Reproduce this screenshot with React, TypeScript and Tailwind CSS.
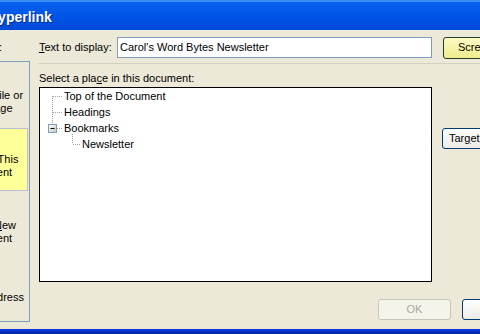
import React from "react";

// XP-style "Insert Hyperlink" dialog, cropped view
const sideItems = [
  { lines: ["Existing File or", "Web Page"], pt: "pt-[27px]", h: "h-[66px]" },
  { lines: ["Place in This", "Document"], pt: "pt-[24px]", h: "h-[63px]", active: true },
  { lines: ["Create New", "Document"], pt: "pt-[28px]", h: "h-[66px]", accel: true },
  { lines: ["E-mail Address"], pt: "pt-[34px]", h: "h-[64px]" },
];

function TreeLines() {
  return (
    <svg
      className="pointer-events-none absolute left-0 top-0"
      width="60"
      height="70"
      viewBox="0 0 60 70"
    >
      <g stroke="#a0a0a0" strokeWidth="1" strokeDasharray="1 1" fill="none">
        <line x1="12.5" y1="8" x2="12.5" y2="36" />
        <line x1="13" y1="8.5" x2="23" y2="8.5" />
        <line x1="13" y1="24.5" x2="23" y2="24.5" />
        <line x1="17" y1="40.5" x2="23" y2="40.5" />
        <line x1="32.5" y1="46" x2="32.5" y2="56" />
        <line x1="33" y1="56.5" x2="41" y2="56.5" />
      </g>
      <defs>
        <linearGradient id="exp" x1="0" y1="0" x2="1" y2="1">
          <stop offset="0" stopColor="#ffffff" />
          <stop offset="1" stopColor="#c6c6bb" />
        </linearGradient>
      </defs>
      <rect x="8.5" y="36.5" width="8" height="8" fill="url(#exp)" stroke="#7f9db9" />
      <line x1="10.5" y1="40.5" x2="14.5" y2="40.5" stroke="#000" />
    </svg>
  );
}

export default function App() {
  return (
    <div className="flex h-[334px] w-[480px] flex-col overflow-hidden font-['Liberation_Sans',Arial,sans-serif] text-[11px] leading-[13px] text-black">
      {/* Title bar */}
      <div className="flex h-[30px] shrink-0 items-center overflow-hidden border-t-2 border-[#3c8cf8] bg-linear-to-b from-[#0a62f0] via-[#0055e6] to-[#0049d8] pt-[3px]">
        <span className="-ml-[54px] whitespace-nowrap text-[14px] font-bold text-white [text-shadow:1px_1px_0_#0a2a8c]">
          Insert Hyperlink
        </span>
      </div>

      {/* Body */}
      <div className="flex flex-1 overflow-hidden bg-[#ece9d8]">
        {/* Link to bar */}
        <div className="w-[30px] shrink-0 overflow-hidden">
          <div className="-ml-[56px] w-[86px]">
            <div className="pt-[11px] pr-[28px] text-right">Link to:</div>
            <div className="mt-[7px] flex h-[261px] flex-col border border-[#7f9db9]">
              {sideItems.map((it, i) => (
                <div
                  key={i}
                  className={`${it.h} ${it.pt} shrink-0 text-center ${
                    it.active ? "mx-[1px] border border-[#b6c0d2] bg-[#ffff99]" : ""
                  }`}
                >
                  {it.lines.map((l, j) => (
                    <div key={j} className="whitespace-nowrap">
                      {it.accel && j === 0 ? (
                        <>
                          Create <span className="underline">N</span>ew
                        </>
                      ) : (
                        l
                      )}
                    </div>
                  ))}
                </div>
              ))}
            </div>
          </div>
        </div>

        {/* Main */}
        <div className="ml-[8px] flex min-w-0 flex-1 flex-col">
          <div className="mt-[7px] flex h-[21px] items-center">
            <span className="w-[79px] shrink-0 whitespace-nowrap pl-[1px]">
              <span className="underline">T</span>ext to display:
            </span>
            <div className="flex h-[21px] w-[315px] shrink-0 items-center border border-[#7f9db9] bg-white pl-[2px]">
              Carol's Word Bytes Newsletter
            </div>
            <button className="ml-[11px] h-[22px] w-[84px] shrink-0 whitespace-nowrap rounded-[3px] border border-[#263f2c] bg-linear-to-b from-[#fbf9c2] to-[#f1ed8e] pl-[14px] text-left">
              ScreenT<span className="underline">i</span>p...
            </button>
          </div>

          <div className="mt-[5px] h-px w-[460px] bg-[#d2d0c0]" />

          <div className="mt-[8px] whitespace-nowrap pl-[1px]">
            Select a pla<span className="underline">c</span>e in this document:
          </div>

          <div className="mt-[2px] flex">
            <div className="relative ml-[1px] h-[195px] w-[393px] shrink-0 border border-black bg-white">
              <TreeLines />
              <div className="flex h-[16px] items-center pl-[24px]">Top of the Document</div>
              <div className="flex h-[16px] items-center pl-[24px]">Headings</div>
              <div className="flex h-[16px] items-center pl-[24px]">Bookmarks</div>
              <div className="flex h-[16px] items-center pl-[42px]">Newsletter</div>
            </div>
            <div className="ml-[10px] shrink-0">
              <button className="mt-[41px] h-[21px] w-[96px] whitespace-nowrap rounded-[3px] border border-[#003c74] bg-linear-to-b from-white to-[#ecebe6] pl-[6px] text-left">
                Tar<span className="underline">g</span>et Frame...
              </button>
            </div>
          </div>

          <div className="mt-[17px] flex">
            <button
              disabled
              className="ml-[340px] h-[21px] w-[73px] shrink-0 rounded-[3px] border border-[#c9c7ba] bg-[#f5f4ea] text-[#aca899]"
            >
              OK
            </button>
            <button className="ml-[11px] h-[21px] w-[73px] shrink-0 rounded-[3px] border border-[#003c74] bg-linear-to-b from-white to-[#ecebe6]">
              Cancel
            </button>
          </div>
        </div>
      </div>

      {/* Bottom frame */}
      <div className="h-[5px] shrink-0 bg-linear-to-b from-[#0a3ee0] to-[#0020a8]" />
    </div>
  );
}
